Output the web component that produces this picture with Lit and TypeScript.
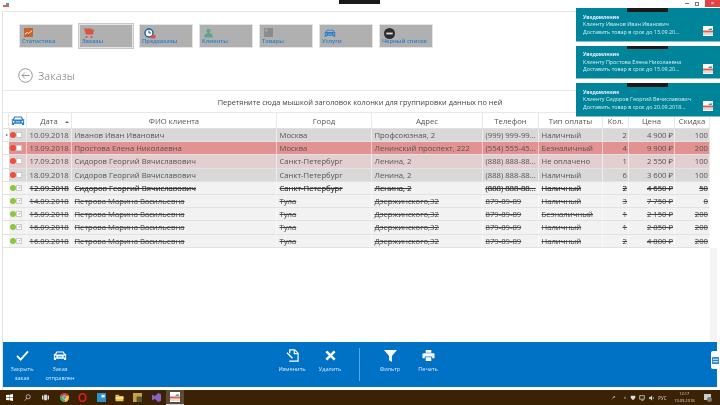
import { LitElement, html, css, svg } from "lit";
import { customElement } from "lit/decorators.js";

const carPath = svg`<path d="M4 1.500h8l2 3.200h1.300v1h-.9l.6 1v4.300h-2.400v-1.300H3.400v1.300H1V6.700l.6-1H.7v-1H2zM4.800 2.600 3.500 4.800h9l-1.300-2.200zM3 6.400a1 1 0 1 0 0 2 1 1 0 0 0 0-2zm10 0a1 1 0 1 0 0 2 1 1 0 0 0 0-2zM5.500 7v1h5V7z" fill-rule="evenodd" fill="currentColor"/>`;

const rows: [string, string, string, string, string, string, string, string, string][] = [
  ["10.09.2018", "Иванов Иван Иванович", "Москва", "Профсоюзная, 2", "(999) 999-99...", "Наличный", "2", "4 900 ₽", "100"],
  ["13.09.2018", "Простова Елена Николаевна", "Москва", "Ленинский проспект, 222", "(554) 555-45...", "Безналичный", "4", "9 900 ₽", "200"],
  ["17.09.2018", "Сидоров Георгий Вячиславович", "Санкт-Петербург", "Ленина, 2", "(888) 888-88...", "Не оплачено", "1", "2 550 ₽", "100"],
  ["18.09.2018", "Сидоров Георгий Вячиславович", "Санкт-Петербург", "Ленина, 2", "(888) 888-88...", "Наличный", "6", "3 600 ₽", "100"],
  ["12.09.2018", "Сидоров Георгий Вячиславович", "Санкт-Петербург", "Ленина, 2", "(888) 888-88...", "Наличный", "2", "4 650 ₽", "50"],
  ["14.09.2018", "Петрова Марина Васильевна", "Тула", "Дзержинского,32", "879-89-89", "Наличный", "3", "7 750 ₽", "0"],
  ["15.09.2018", "Петрова Марина Васильевна", "Тула", "Дзержинского,32", "879-89-89", "Безналичный", "1", "2 150 ₽", "200"],
  ["16.09.2018", "Петрова Марина Васильевна", "Тула", "Дзержинского,32", "879-89-89", "Наличный", "1", "2 850 ₽", "200"],
  ["16.09.2018", "Петрова Марина Васильевна", "Тула", "Дзержинского,32", "879-89-89", "Наличный", "2", "4 800 ₽", "200"],
];
const rowClass = ["g", "r", "p", "g", "d strong", "d", "d", "d", "d"];

const heads = ["Дата", "ФИО клиента", "Город", "Адрес", "Телефон", "Тип оплаты", "Кол.", "Цена", "Скидка"];

const notes = [
  ["Клиенту Иванов Иван Иванович", "Доставить товар в срок до 13.09.20..."],
  ["Клиенту Простова Елена Николаевна", "Доставить товар в срок до 15.09.20..."],
  ["Клиенту Сидоров Георгий Вячиславович", "Доставить товар в срок до 20.09.2018..."],
];

const appIcon = html`<svg viewBox="0 0 10 10" width="10" height="10"><rect width="10" height="10" fill="#fff"/><rect x="0" y="4.500" width="10" height="2" fill="#e0604f"/><path d="M5 4l2-2 1 1 1-1.500V4z" fill="#3aa9a0"/><rect y="7.500" width="10" height="1" fill="#bbb"/></svg>`;

const tiles = [
  ["Статистика", html`<svg viewBox="0 0 10 10" width="9" height="9"><rect width="10" height="10" fill="#c8622a"/><path d="M1 7l2.500-2 1.500 1L9 3" stroke="#fff" fill="none"/></svg>`],
  ["Заказы", html`<svg viewBox="0 0 10 10" width="10" height="10"><path d="M0 .5h7.500l-.2 1H10l-1 5H2zM2.500 8a1 1 0 1 0 .01 0zM7.500 8a1 1 0 1 0 .01 0z" fill="#d9553f"/></svg>`],
  ["Предзаказы", html`<svg viewBox="0 0 12 12" width="12" height="12"><circle cx="5" cy="5" r="4" fill="#fff" stroke="#1d5f99" stroke-width="1.400"/><path d="M5 2.500V5h2" stroke="#1d5f99" fill="none"/><rect x="7" y="7" width="4.500" height="3.500" fill="#d9553f"/></svg>`],
  ["Клиенты", html`<svg viewBox="0 0 10 10" width="9" height="10"><circle cx="5" cy="2.600" r="2.400" fill="#5fa58c"/><path d="M.5 10V8c0-2 2-3 4.500-3s4.500 1 4.500 3v2z" fill="#5fa58c"/></svg>`],
  ["Товары", html`<svg viewBox="0 0 10 10" width="9" height="9"><rect width="10" height="10" fill="#8c8c8c"/><rect x="1" y="1" width="3" height="3" fill="#a5a5a5"/></svg>`],
  ["Услуги", html`<svg class="blue" viewBox="0 0 16 12" width="12" height="10">${carPath}</svg>`],
  ["Черный список", html`<svg viewBox="0 0 12 12" width="11" height="11"><circle cx="6" cy="6" r="6" fill="#2d2d2d"/><rect x="2.500" y="5" width="7" height="2" fill="#ddd"/></svg>`],
];

@customElement("app-root")
export class AppRoot extends LitElement {
  static styles = css`
    :host { display: block; width: 720px; height: 405px; position: relative; overflow: hidden; background: #fff;
      font-family: "Open Sans", "Noto Sans", sans-serif; font-size: 7.7px; color: #555; filter: blur(0.25px); }
    .shell { display: flex; flex-direction: column; height: 405px; }
    .title { height: 11px; display: flex; align-items: flex-start; padding-left: 3px; flex: none; }
    .title svg { margin-top: 3px; }
    .controls { margin-left: auto; display: flex; align-items: center; height: 7px; }
    .controls span { display: block; }
    .min { width: 4px; height: 1px; background: #777; margin-right: 6px; }
    .max { width: 4px; height: 4px; border: 1px solid #777; box-sizing: border-box; margin-right: 6px; }
    .close { width: 15px; height: 7px; background: #e04343; color: #fff; font-size: 6px; line-height: 7px; text-align: center; }
    .win { flex: 1; min-height: 0; margin-left: 2px; border-left: 1px solid #e2e2e2; border-top: 1px solid #e6e6e6; display: flex; flex-direction: column; }
    .nav { display: flex; gap: 6px; padding: 12px 0 0 16px; height: 24px; flex: none; }
    .tile { width: 54px; height: 24px; box-sizing: border-box; background: #b0b0b0; border: 1px solid #e4e4e4; color: #2a7fc8; font-size: 5.800px; font-weight: 600; display: flex; flex-direction: column; padding: 3px 0 0 2px; line-height: 8px; white-space: nowrap; }
    .tile .ic { height: 9px; padding-left: 2px; display: block; }
    .tile .ic svg { display: block; }
    .tile .blue { color: #2a7fc8; }
    .tile.sel { outline: 1px solid #c9c9c9; box-shadow: 0 0 0 1px #e8e8e8; }
    .head { display: flex; align-items: center; gap: 5px; padding: 17px 0 0 15px; height: 21px; flex: none; }
    .head h1 { margin: 0; font-weight: 300; font-size: 11px; color: #707070; letter-spacing: .2px; }
    .rule { height: 1px; background: #e8e8e8; margin-top: 4px; flex: none; }
    .hint { height: 21px; line-height: 22px; text-align: center; font-size: 7.400px; color: #444; flex: none; padding-right: 3px; }
    .tablewrap { flex: 1; min-height: 0; display: flex; }
    .table { width: 707px; flex: none; }
    .row { display: grid; grid-template-columns: 6px 18px 45px 205px 95px 111px 56px 64px 26px 46px 35px; height: 13.200px; line-height: 13px; box-sizing: border-box; border-bottom: 1px solid #e2e2e2; white-space: nowrap; }
    .row.hd { height: 17px; line-height: 17px; background: #fff; color: #555; border-bottom: 1px solid #e0e0e0; border-top: 1px solid #e8e8e8; }
    .row > div { border-right: 1px solid rgba(255,255,255,.55); overflow: hidden; padding: 0 2.500px; box-sizing: border-box; }
    .row.hd > div { text-align: center; border-right: 1px solid #e8e8e8; position: relative; }
    .row > div.ind, .row > div.st { padding: 0; display: flex; align-items: center; }
    .row > div.ind { background: #fff; }
    .row > div.st { gap: .5px; padding-left: .5px; }
    .row.hd > div.st { justify-content: center; padding: 0; color: #2a7fc8; }
    .row > div.num { text-align: right; padding-right: 1px; }
    .row .sort { position: absolute; right: 2px; top: 6px; width: 0; height: 0; border: 2px solid transparent; border-bottom-color: #666; }
    .g { background: #d8d8d8; }
    .r { background: #e39292; }
    .p { background: #e3cfcf; }
    .d { background: #f2f2f2; color: #444; }
    .d > div.t { text-decoration: line-through; }
    .strong { color: #333; }
    .row.strong > div.t { -webkit-text-stroke: 0.15px #333; }
    .tri { width: 0; height: 0; border: 1.500px solid transparent; border-left: 2px solid #555; margin-left: 3px; }
    .dot { width: 6px; height: 6px; border-radius: 50%; background: #e8503a; flex: none; }
    .d .dot { background: #8cc63f; }
    .box { width: 4px; height: 4px; background: #fff; border: .5px solid #ccc; flex: none; font-size: 4px; line-height: 4px; text-align: center; color: #555; box-sizing: content-box; }
    .scroll { flex: 1; background: #f4f4f4; margin-right: 3px; margin-top: 136px; }
    .bar { height: 45px; flex: none; background: #0072c6; margin: 0 3px 3px 0; display: flex; padding-top: 7px; box-sizing: border-box; color: #d7e9f7; font-size: 5.600px; line-height: 9px; text-align: center; }
    .btn { width: 38px; flex: none; display: flex; flex-direction: column; align-items: center; gap: 3px; }
    .btn svg { display: block; flex: none; }
    .btn svg.small { margin: 1px 0; color: #fff; }
    .btn .lb { display: block; }
    .mid { margin-left: 194px; }
    .sep { width: 1px; height: 33px; background: #5ba4dd; margin: -1px 11px 0 10px; flex: none; }
    .taskbar { height: 15px; flex: none; background: #3b2205; display: flex; align-items: center; color: #ddd; }
    .tb { width: 18.400px; height: 15px; display: flex; align-items: center; justify-content: center; flex: none; box-sizing: border-box; }
    .tb.on { background: #5c4a35; border-bottom: 1px solid #ccc; }
    .tray { margin-left: auto; display: flex; align-items: center; gap: 3.500px; font-size: 4.500px; padding-right: 8px; }
    .tray .gapped { margin-left: 4px; }
    .clock { text-align: center; line-height: 6.500px; font-size: 4px; margin-left: 4px; }
    .notif { margin-left: 6px; }
    .notes { position: absolute; right: 0; top: 8px; width: 144px; display: flex; flex-direction: column; gap: 4px; }
    .note { height: 33.500px; background: #00849a; border-bottom: 1px solid #7fc4cf; box-sizing: border-box; color: #d4eef2; font-size: 5.400px; line-height: 7.700px; padding: 5.500px 0 0 7px; position: relative; white-space: nowrap; }
    .note b { color: #eef; font-weight: 700; font-size: 5px; display: block; }
    .grip { position: absolute; top: 0; left: 51px; width: 41px; height: 3.500px; background: #1a1a1a; }
    .note svg { position: absolute; right: 7px; top: 18px; }
    .topgrip { position: absolute; left: 339px; top: 0; width: 41px; height: 4px; background: #1a1a1a; }
    .side { position: absolute; right: 0; top: 351px; width: 9px; height: 18px; background: #fff; border-radius: 2px 0 0 2px; display: flex; align-items: center; justify-content: center; }
  `;

  render() {
    return html`
      <div class="shell">
        <div class="title">
          <svg viewBox="0 0 6 4" width="6" height="4"><rect y="2" width="6" height="2" fill="#e0604f"/><rect x="3" width="3" height="2" fill="#3aa9a0"/></svg>
          <div class="controls"><span class="min"></span><span class="max"></span><span class="close">×</span></div>
        </div>
        <div class="win">
          <div class="nav">
            ${tiles.map(([label, ic], i) => html`<div class="tile ${i === 1 ? "sel" : ""}"><span class="ic">${ic}</span><span>${label}</span></div>`)}
          </div>
          <div class="head">
            <svg viewBox="0 0 15 15" width="15" height="15"><circle cx="7.500" cy="7.500" r="6.800" fill="none" stroke="#9a9a9a"/><path d="M11.500 7.500H4M7 4.500l-3 3 3 3" fill="none" stroke="#9a9a9a"/></svg>
            <h1>Заказы</h1>
          </div>
          <div class="rule"></div>
          <div class="hint">Перетяните сюда мышкой заголовок колонки для группировки данных по ней</div>
          <div class="tablewrap">
            <div class="table">
              <div class="row hd">
                <div></div>
                <div class="st"><svg viewBox="0 0 16 12" width="14" height="11">${carPath}</svg></div>
                ${heads.map((h, i) => html`<div>${h}${i === 0 ? html`<span class="sort"></span>` : ""}</div>`)}
              </div>
              ${rows.map((r, i) => html`
                <div class="row ${rowClass[i]}">
                  <div class="ind">${i === 0 ? html`<span class="tri"></span>` : ""}</div>
                  <div class="st"><span class="dot"></span><span class="box">${i > 3 ? "✓" : ""}</span></div>
                  ${r.map((c, j) => html`<div class="t ${j >= 6 ? "num" : ""}">${c}</div>`)}
                </div>`)}
            </div>
            <div class="scroll"></div>
          </div>
          <div class="bar">
            <div class="btn"><svg class="small" viewBox="0 0 14 12" width="13" height="11"><path d="M1 6.500l4 4L13 1.500" fill="none" stroke="#fff" stroke-width="2"/></svg><span class="lb">Закрыть<br />заказ</span></div>
            <div class="btn"><svg class="small" viewBox="0 0 16 12" width="14" height="11">${carPath}</svg><span class="lb">Заказ<br />отправлен</span></div>
            <div class="btn mid"><svg viewBox="0 0 14 14" width="13" height="13"><path d="M4 4.500V1h5.500L13 4.500V13H3.500M9 1v4h4M1 4l6 6" fill="none" stroke="#fff" stroke-width="1.300"/></svg><span class="lb">Изменить</span></div>
            <div class="btn"><svg viewBox="0 0 14 14" width="13" height="13"><path d="M2.500 2.500l9 9M11.500 2.500l-9 9" fill="none" stroke="#fff" stroke-width="2.600"/></svg><span class="lb">Удалить</span></div>
            <div class="sep"></div>
            <div class="btn"><svg viewBox="0 0 14 14" width="13" height="13"><path d="M0 1h14L8.500 7.500V14L5.500 12V7.500z" fill="#fff"/></svg><span class="lb">Фильтр</span></div>
            <div class="btn"><svg viewBox="0 0 14 14" width="13" height="13"><path d="M4 1h6v3H4zM1.500 4.500h11a1 1 0 0 1 1 1V10H11V8H3v2H.5V5.500a1 1 0 0 1 1-1zM4 9h6v4H4z" fill="#fff"/></svg><span class="lb">Печать</span></div>
          </div>
        </div>
        <div class="taskbar">
          <div class="tb"><svg viewBox="0 0 10 10" width="7" height="7"><path d="M0 1.500L4.500 1v3.800H0zM5 .9L10 0v4.800H5zM0 5.200h4.500V9L0 8.500zM5 5.200h5V10l-5-.9z" fill="#fff"/></svg></div>
          <div class="tb"><svg viewBox="0 0 10 10" width="7" height="7"><circle cx="6" cy="4" r="3" fill="none" stroke="#ddd"/><path d="M4 6L1 9.500" stroke="#ddd"/></svg></div>
          <div class="tb"><svg viewBox="0 0 10 10" width="7" height="7"><path d="M3 1h4v8H3zM0 2h2v6H0zM8 2h2v6H8z" fill="#ddd"/></svg></div>
          <div class="tb"><svg viewBox="0 0 10 10" width="9" height="9"><circle cx="5" cy="5" r="5" fill="#d8433a"/><path d="M5 5L9.300 2.500A5 5 0 0 1 5 10z" fill="#f1c232"/><path d="M5 5L5 10A5 5 0 0 1 .7 2.500z" fill="#4aa64a"/><circle cx="5" cy="5" r="2" fill="#4a86d8" stroke="#fff" stroke-width=".6"/></svg></div>
          <div class="tb"><svg viewBox="0 0 10 10" width="9" height="9"><ellipse cx="5" cy="5" rx="3.700" ry="4.300" fill="none" stroke="#d3201f" stroke-width="2"/></svg></div>
          <div class="tb"><svg viewBox="0 0 10 10" width="9" height="9"><rect width="10" height="10" fill="#2e90c8"/><rect x="5" y="2" width="3.500" height="3" fill="#dff"/></svg></div>
          <div class="tb"><svg viewBox="0 0 10 10" width="9" height="8"><path d="M0 1h4l1 1.500h5V9H0z" fill="#e8c24a"/><rect y="4" width="10" height="2" fill="#f6e6a5"/></svg></div>
          <div class="tb"><svg viewBox="0 0 10 10" width="9" height="9"><rect width="10" height="10" fill="#c9a23a"/><rect x="4" y="4" width="6" height="6" fill="#4a5a3a"/></svg></div>
          <div class="tb"><svg viewBox="0 0 10 10" width="9" height="9"><path d="M7 0l3 1.500v7L7 10 3 6.500 1 8 0 7.500v-5L1 2l2 1.500z" fill="#8a63c8"/></svg></div>
          <div class="tb on">${appIcon}</div>
          <div class="tray">
            <svg viewBox="0 0 8 8" width="6" height="6"><path d="M1 7l3-4 2-2 1 2-3 1z" fill="#bbb"/></svg>
            <span class="gapped">^</span>
            <svg viewBox="0 0 8 8" width="6" height="6"><path d="M1 1h6v3L4 7 1 4z" fill="#ddd"/></svg>
            <svg viewBox="0 0 8 8" width="6" height="6"><rect x="1" y="1" width="6" height="4.500" fill="none" stroke="#ddd"/><path d="M3 7h3" stroke="#ddd"/></svg>
            <svg viewBox="0 0 8 8" width="6" height="6"><path d="M0 3h2l2-2v6L2 5H0zM5.500 2.500q1.500 1.500 0 3" fill="#ddd" stroke="#ddd" stroke-width=".4"/></svg>
            <span>РУС</span>
            <div class="clock">12:17<br />19.09.2018</div>
            <svg class="notif" viewBox="0 0 8 8" width="8" height="8"><rect x="0" y="0" width="7" height="6" fill="#ccc"/><circle cx="5.500" cy="5.500" r="2.500" fill="#777"/></svg>
          </div>
        </div>
      </div>
      <div class="topgrip"></div>
      <div class="notes">
        ${notes.map(([a, b]) => html`<div class="note"><span class="grip"></span><b>Уведомление</b>${a}<br />${b}${appIcon}</div>`)}
      </div>
      <div class="side"><svg viewBox="0 0 8 8" width="7" height="7"><rect width="8" height="8" rx="1" fill="#2a86d0"/><rect x="1" y="2" width="6" height="1" fill="#fff"/><rect x="1" y="5" width="6" height="1" fill="#fff"/></svg></div>
    `;
  }
}
